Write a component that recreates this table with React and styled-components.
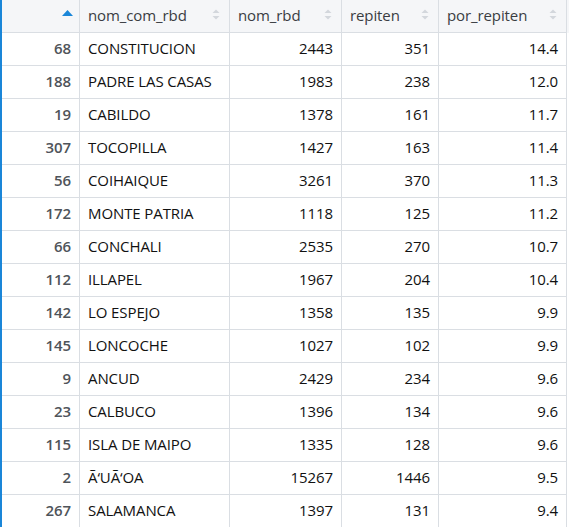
import React from "react";
import styled, { createGlobalStyle } from "styled-components";

const Global = createGlobalStyle`
  html, body { margin: 0; padding: 0; background: #fff; }
  body { font-family: "Open Sans", "Noto Sans", sans-serif; }
`;

const Grid = styled.div`
  width: 567px;
  border-left: 2px solid #1a86d8;
  display: flex;
  flex-direction: column;
`;

const Row = styled.div`
  display: grid;
  grid-template-columns: 78px 150px 112px 97px 128px;
  height: 33px;
  background: ${(p) => (p.$head ? "#f5f6f8" : "#fff")};
`;

const Cell = styled.div`
  box-sizing: border-box;
  border-right: 1px solid #dadee3;
  border-bottom: 1px solid #dadee3;
  display: flex;
  align-items: center;
  justify-content: ${(p) => (p.$right ? "flex-end" : "flex-start")};
  padding: 0 8px 3px 8px;
  font-size: 15px;
  letter-spacing: -0.1px;
  color: ${(p) => (p.$index ? "#4f545a" : "#111")};
  font-weight: ${(p) => (p.$index ? 600 : 400)};
  white-space: nowrap;
  overflow: hidden;
`;

const HeadCell = styled(Cell)`
  justify-content: space-between;
  color: #3a3d42;
  padding-right: 9px;
`;

const IndexHead = styled(Cell)`
  justify-content: flex-end;
  align-items: flex-start;
  padding-top: 10px;
  padding-right: 6px;
`;

const SortIcon = ({ active }) =>
  active ? (
    <svg width="11" height="6" viewBox="0 0 11 6">
      <polygon points="0,6 5.5,0 11,6" fill="#1a86d8" />
    </svg>
  ) : (
    <svg width="8" height="11" viewBox="0 0 8 11">
      <polygon points="0.5,4 4,0.5 7.5,4" fill="#d3d7dc" />
      <polygon points="0.5,7 4,10.5 7.5,7" fill="#d3d7dc" />
    </svg>
  );

const data = [
  [68, "CONSTITUCION", 2443, 351, "14.4"],
  [188, "PADRE LAS CASAS", 1983, 238, "12.0"],
  [19, "CABILDO", 1378, 161, "11.7"],
  [307, "TOCOPILLA", 1427, 163, "11.4"],
  [56, "COIHAIQUE", 3261, 370, "11.3"],
  [172, "MONTE PATRIA", 1118, 125, "11.2"],
  [66, "CONCHALI", 2535, 270, "10.7"],
  [112, "ILLAPEL", 1967, 204, "10.4"],
  [142, "LO ESPEJO", 1358, 135, "9.9"],
  [145, "LONCOCHE", 1027, 102, "9.9"],
  [9, "ANCUD", 2429, 234, "9.6"],
  [23, "CALBUCO", 1396, 134, "9.6"],
  [115, "ISLA DE MAIPO", 1335, 128, "9.6"],
  [2, "Ã‘UÃ‘OA", 15267, 1446, "9.5"],
  [267, "SALAMANCA", 1397, 131, "9.4"],
];

const headers = ["nom_com_rbd", "nom_rbd", "repiten", "por_repiten"];

export default function App() {
  return (
    <>
      <Global />
      <Grid>
        <Row $head>
          <IndexHead>
            <SortIcon active />
          </IndexHead>
          {headers.map((h) => (
            <HeadCell key={h}>
              <span>{h}</span>
              <SortIcon />
            </HeadCell>
          ))}
        </Row>
        {data.map((r) => (
          <Row key={r[0]}>
            <Cell $right $index>{r[0]}</Cell>
            <Cell>{r[1]}</Cell>
            <Cell $right>{r[2]}</Cell>
            <Cell $right>{r[3]}</Cell>
            <Cell $right>{r[4]}</Cell>
          </Row>
        ))}
      </Grid>
    </>
  );
}
